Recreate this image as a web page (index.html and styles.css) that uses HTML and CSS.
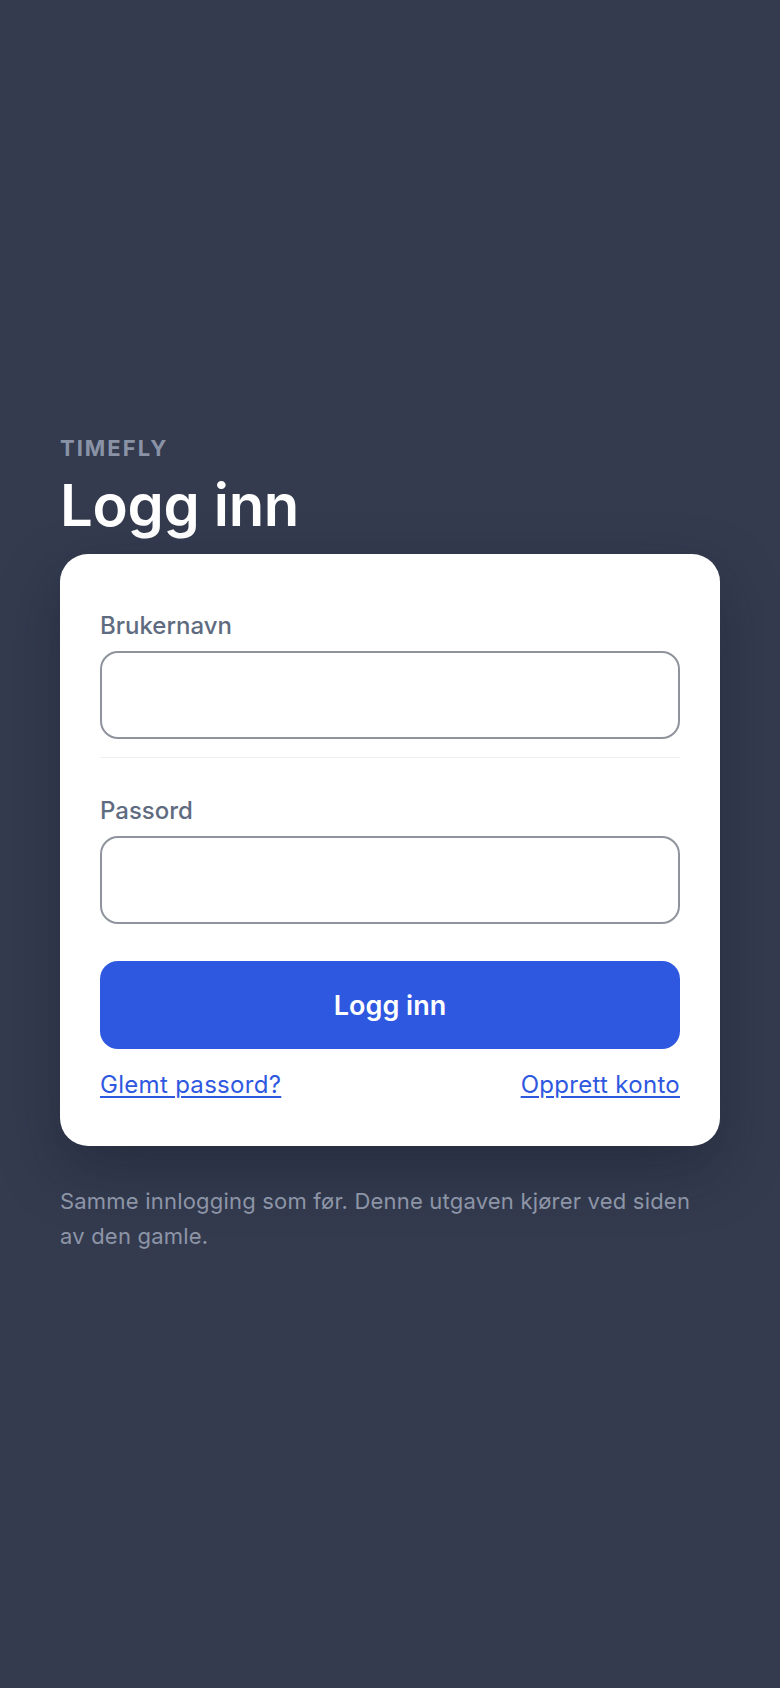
FILE: index.html
```html
<!DOCTYPE html>
<html lang="nb">
<head>
    <meta charset="UTF-8">
    <title>Logg inn - Timefly</title>
    <link rel="stylesheet" href="styles.css">
</head>
<body>

<main class="page">
    <div class="brand">TIMEFLY</div>
    <h1 class="title">Logg inn</h1>

    <form class="card">
        <div class="field field-first">
            <label class="label" for="user">Brukernavn</label>
            <input class="input" id="user" type="text">
        </div>
        <div class="field">
            <label class="label" for="pass">Passord</label>
            <input class="input" id="pass" type="password">
        </div>
        <button class="btn" type="button">Logg inn</button>
        <div class="links">
            <a href="#">Glemt passord?</a>
            <a href="#">Opprett konto</a>
        </div>
    </form>

    <p class="footnote">Samme innlogging som før. Denne utgaven kjører ved siden av den gamle.</p>
</main>

</body>
</html>
```

FILE: styles.css
```css
* {
  box-sizing: border-box;
}
body {
  margin: 0;
  background-color: #343b4f;
  font-family: Inter, "Noto Sans", Arial, sans-serif;
  color: #2c3e50;
}
.page {
  min-height: 100vh;
  display: flex;
  flex-direction: column;
  justify-content: center;
  padding: 0 60px;
}
.brand {
  font-size: 22px;
  line-height: 28px;
  font-weight: 700;
  letter-spacing: 2px;
  color: #8a93a6;
}
.title {
  margin: 10px 0 16px;
  font-size: 58px;
  line-height: 66px;
  font-weight: 600;
  letter-spacing: -0.3px;
  color: #ffffff;
}
.card {
  background: #ffffff;
  border-radius: 28px;
  padding: 56px 40px 45px;
  box-shadow: 0 24px 60px rgba(15, 20, 35, 0.35);
}
.field {
  display: flex;
  flex-direction: column;
  gap: 9px;
}
.field-first {
  padding-bottom: 18px;
  border-bottom: 1px solid #eceef1;
  margin-bottom: 37px;
}
.label {
  font-size: 24px;
  line-height: 32px;
  font-weight: 500;
  color: #5f6b80;
}
.input {
  height: 88px;
  border: 2px solid #8f949c;
  border-radius: 18px;
  background: #ffffff;
  font-family: inherit;
  font-size: 22px;
  padding: 0 20px;
  outline: none;
}
.btn {
  display: block;
  width: 100%;
  height: 88px;
  margin-top: 37px;
  border: none;
  border-radius: 18px;
  background: #2f58e0;
  color: #ffffff;
  font-family: inherit;
  font-size: 27px;
  font-weight: 600;
}
.links {
  display: flex;
  justify-content: space-between;
  margin-top: 20px;
  font-size: 24px;
  line-height: 32px;
  letter-spacing: 0.3px;
}
.links a {
  color: #2f58e0;
  text-decoration: underline;
  text-underline-offset: 3px;
}
.footnote {
  margin: 38px 0 0;
  font-size: 22px;
  line-height: 35px;
  letter-spacing: 0.2px;
  color: #8d95a7;
}
```
